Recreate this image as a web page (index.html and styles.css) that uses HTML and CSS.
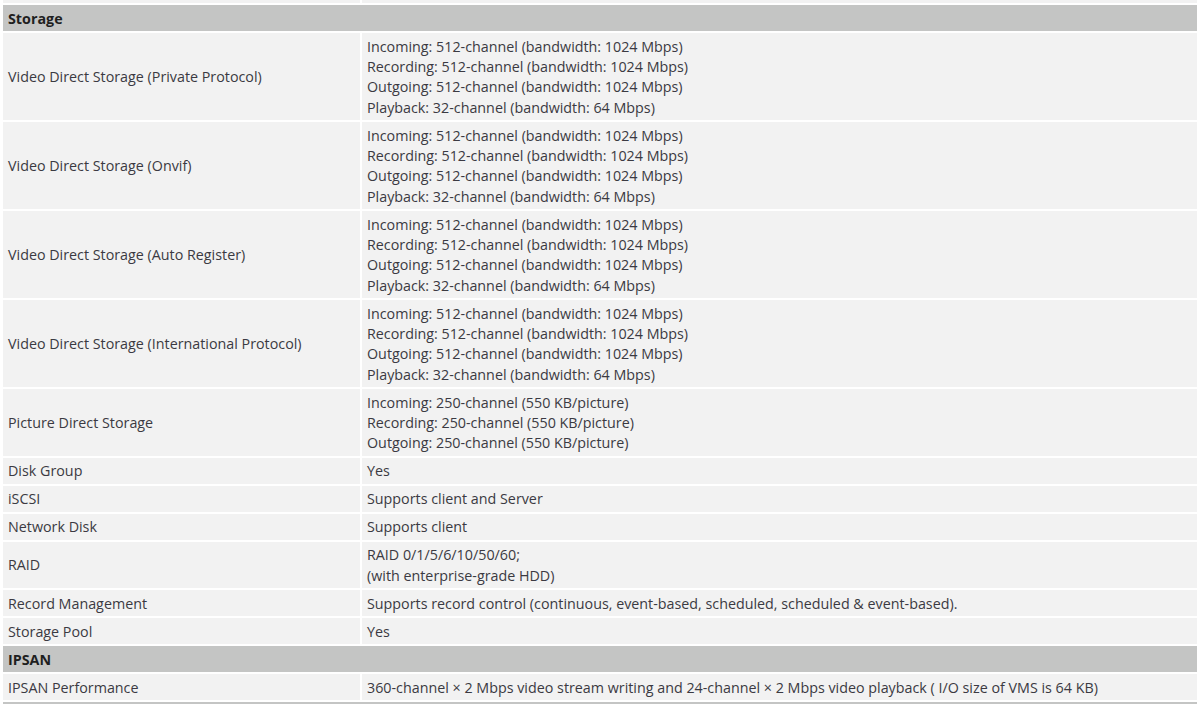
FILE: index.html
```html
<!DOCTYPE html>
<html>
<head>
<meta charset="utf-8">
<link rel="stylesheet" href="styles.css">
</head>
<body>
<table class="spec">
  <colgroup><col class="c1"><col class="c2"></colgroup>
  <tbody>
    <tr><td>Hot Spare</td><td>Supported</td></tr>
    <tr class="head"><td colspan="2">Storage</td></tr>
    <tr><td>Video Direct Storage (Private Protocol)</td><td>Incoming: 512-channel (bandwidth: 1024 Mbps)<br>Recording: 512-channel (bandwidth: 1024 Mbps)<br>Outgoing: 512-channel (bandwidth: 1024 Mbps)<br>Playback: 32-channel (bandwidth: 64 Mbps)</td></tr>
    <tr><td>Video Direct Storage (Onvif)</td><td>Incoming: 512-channel (bandwidth: 1024 Mbps)<br>Recording: 512-channel (bandwidth: 1024 Mbps)<br>Outgoing: 512-channel (bandwidth: 1024 Mbps)<br>Playback: 32-channel (bandwidth: 64 Mbps)</td></tr>
    <tr><td>Video Direct Storage (Auto Register)</td><td>Incoming: 512-channel (bandwidth: 1024 Mbps)<br>Recording: 512-channel (bandwidth: 1024 Mbps)<br>Outgoing: 512-channel (bandwidth: 1024 Mbps)<br>Playback: 32-channel (bandwidth: 64 Mbps)</td></tr>
    <tr><td>Video Direct Storage (International Protocol)</td><td>Incoming: 512-channel (bandwidth: 1024 Mbps)<br>Recording: 512-channel (bandwidth: 1024 Mbps)<br>Outgoing: 512-channel (bandwidth: 1024 Mbps)<br>Playback: 32-channel (bandwidth: 64 Mbps)</td></tr>
    <tr><td>Picture Direct Storage</td><td>Incoming: 250-channel (550 KB/picture)<br>Recording: 250-channel (550 KB/picture)<br>Outgoing: 250-channel (550 KB/picture)</td></tr>
    <tr><td>Disk Group</td><td>Yes</td></tr>
    <tr><td>iSCSI</td><td>Supports client and Server</td></tr>
    <tr><td>Network Disk</td><td>Supports client</td></tr>
    <tr><td>RAID</td><td>RAID 0/1/5/6/10/50/60;<br>(with enterprise-grade HDD)</td></tr>
    <tr><td>Record Management</td><td>Supports record control (continuous, event-based, scheduled, scheduled &amp; event-based).</td></tr>
    <tr><td>Storage Pool</td><td>Yes</td></tr>
    <tr class="head"><td colspan="2">IPSAN</td></tr>
    <tr><td>IPSAN Performance</td><td>360-channel × 2 Mbps video stream writing and 24-channel × 2 Mbps video playback ( I/O size of VMS is 64 KB)</td></tr>
    <tr class="head"><td colspan="2">Network</td></tr>
  </tbody>
</table>
</body>
</html>
```
FILE: styles.css
```css
html, body {
  margin: 0;
  padding: 0;
  background: #ffffff;
}
body {
  overflow: hidden;
}
.spec {
  border-collapse: separate;
  border-spacing: 2px;
  width: 1198px;
  margin: -25px 0 0 1px;
  font-family: "Open Sans", "Segoe UI", sans-serif;
  font-size: 14.3px;
  line-height: 20.33px;
  color: #3b3a42;
  table-layout: fixed;
}
.c1 { width: 357px; }
.spec td {
  background: #f2f2f2;
  padding: 3.6px 5px 2.08px;
  vertical-align: middle;
}
.spec tr.head td {
  background: #c4c5c4;
  font-weight: bold;
  color: #1f1f1f;
}
```
